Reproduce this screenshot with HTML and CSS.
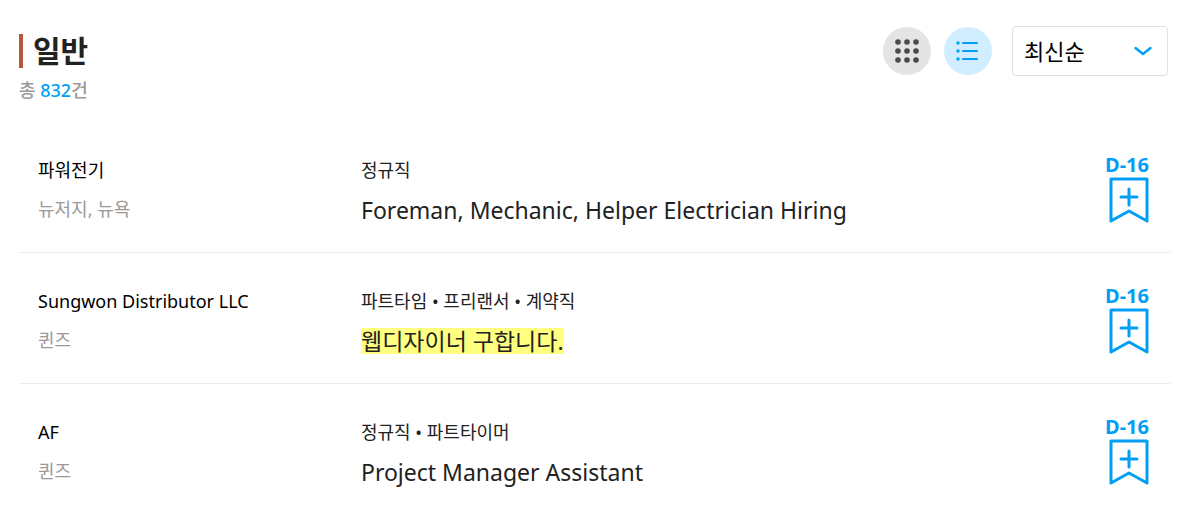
FILE: index.html
```html
<!DOCTYPE html>
<html lang="ko">
<head>
  <meta charset="UTF-8">
  <meta name="viewport" content="width=device-width, initial-scale=1.0">
  <title>일반 채용</title>
  <link rel="stylesheet" href="styles.css">
</head>
<body>
  <svg width="0" height="0" class="symbols" aria-hidden="true">
    <symbol id="bookmark" viewBox="0 0 40 46">
      <path d="M2 2h36v42L20 34 2 44z"/>
      <path d="M20 12v16M12 20h16"/>
    </symbol>
  </svg>

  <main class="container">
    <header class="header">
      <div class="heading">
        <h1>일반</h1>
        <p class="total">총 <strong>832</strong>건</p>
      </div>
      <div class="tools">
        <button type="button" class="view-btn" aria-label="격자로 보기">
          <svg width="26" height="26" viewBox="0 0 26 26" fill="#4a4a4a">
            <circle cx="4" cy="4" r="2.800"/><circle cx="13" cy="4" r="2.800"/><circle cx="22" cy="4" r="2.800"/>
            <circle cx="4" cy="13" r="2.800"/><circle cx="13" cy="13" r="2.800"/><circle cx="22" cy="13" r="2.800"/>
            <circle cx="4" cy="22" r="2.800"/><circle cx="13" cy="22" r="2.800"/><circle cx="22" cy="22" r="2.800"/>
          </svg>
        </button>
        <button type="button" class="view-btn active" aria-label="목록으로 보기">
          <svg width="24" height="24" viewBox="0 0 24 24" fill="#009ff5">
            <circle cx="2" cy="4" r="1.700"/><circle cx="2" cy="12" r="1.700"/><circle cx="2" cy="20" r="1.700"/>
            <rect x="6" y="3" width="16" height="2" rx="1"/>
            <rect x="6" y="11" width="16" height="2" rx="1"/>
            <rect x="6" y="19" width="16" height="2" rx="1"/>
          </svg>
        </button>
        <div class="sort">
          <select aria-label="정렬">
            <option>최신순</option>
            <option>마감순</option>
          </select>
          <svg width="18" height="10" viewBox="0 0 18 10"><path d="M1.500 2 9 8l7.500-6"/></svg>
        </div>
      </div>
    </header>

    <ul class="jobs">
      <li class="job">
        <div class="company">
          <p class="name">파워전기</p>
          <p class="place">뉴저지, 뉴욕</p>
        </div>
        <div class="detail">
          <p class="type">정규직</p>
          <h2><a href="#">Foreman, Mechanic, Helper Electrician Hiring</a></h2>
        </div>
        <div class="scrap">
          <span class="dday">D-16</span>
          <button type="button" aria-label="스크랩"><svg width="40" height="46"><use href="#bookmark"/></svg></button>
        </div>
      </li>
      <li class="job">
        <div class="company">
          <p class="name">Sungwon Distributor LLC</p>
          <p class="place">퀸즈</p>
        </div>
        <div class="detail">
          <p class="type">파트타임 • 프리랜서 • 계약직</p>
          <h2><a href="#" class="highlight">웹디자이너 구합니다.</a></h2>
        </div>
        <div class="scrap">
          <span class="dday">D-16</span>
          <button type="button" aria-label="스크랩"><svg width="40" height="46"><use href="#bookmark"/></svg></button>
        </div>
      </li>
      <li class="job">
        <div class="company">
          <p class="name">AF</p>
          <p class="place">퀸즈</p>
        </div>
        <div class="detail">
          <p class="type">정규직 • 파트타이머</p>
          <h2><a href="#">Project Manager Assistant</a></h2>
        </div>
        <div class="scrap">
          <span class="dday">D-16</span>
          <button type="button" aria-label="스크랩"><svg width="40" height="46"><use href="#bookmark"/></svg></button>
        </div>
      </li>
    </ul>
  </main>
</body>
</html>
```
FILE: styles.css
```css
* {
  box-sizing: border-box;
}
body {
  margin: 0;
  background-color: #fff;
  color: #222;
  font-family: "Noto Sans", "Noto Sans CJK KR", sans-serif;
  font-size: 18px;
}
h1, h2, p, ul {
  margin: 0;
  padding: 0;
}
button {
  border: 0;
  padding: 0;
  background: none;
  cursor: pointer;
}
svg {
  display: block;
}
.symbols {
  position: absolute;
}
.container {
  padding: 26px 10px 0 19px;
}
.header {
  display: flex;
  justify-content: space-between;
  align-items: flex-start;
  padding-right: 2px;
}
.heading {
  padding-top: 8px;
}
h1 {
  border-left: 4px solid #b5573a;
  padding-left: 10px;
  font-size: 30px;
  line-height: 34px;
}
.total {
  margin-top: 10px;
  color: #999;
  font-weight: 500;
  line-height: 24px;
}
.total strong {
  color: #009ff5;
  font-weight: 500;
}
.tools {
  display: flex;
  align-items: center;
  gap: 13px;
}
.view-btn {
  display: flex;
  align-items: center;
  justify-content: center;
  width: 48px;
  height: 48px;
  border-radius: 50%;
  background-color: #e4e4e4;
}
.view-btn.active {
  background-color: #d0eeff;
}
.sort {
  display: grid;
  align-items: center;
  margin-left: 7px;
}
.sort select,
.sort svg {
  grid-area: 1 / 1;
}
.sort select {
  appearance: none;
  width: 156px;
  height: 50px;
  padding: 0 11px;
  border: 1px solid #dde2e4;
  border-radius: 4px;
  background-color: #fff;
  color: #000;
  font-family: inherit;
  font-size: 22px;
}
.sort svg {
  justify-self: end;
  margin-right: 16px;
  fill: none;
  stroke: #009ff5;
  stroke-width: 2.5;
  stroke-linecap: round;
  stroke-linejoin: round;
  pointer-events: none;
}
.jobs {
  margin-top: 20px;
  list-style: none;
}
.job {
  display: flex;
  align-items: flex-start;
  padding: 31px 21px 26px 19px;
  border-bottom: 1px solid #ebebeb;
}
.job:last-child {
  padding-bottom: 0;
  border-bottom: 0;
}
.company,
.detail {
  padding-top: 5px;
}
.company {
  width: 323px;
}
.detail {
  flex: 1;
}
.name, .place, .type {
  line-height: 24px;
}
.name {
  color: #000;
}
.place {
  margin-top: 15px;
  color: #999;
}
h2 {
  margin-top: 12px;
  font-size: 23px;
  font-weight: 400;
  line-height: 32px;
}
h2 a {
  color: inherit;
  text-decoration: none;
}
.highlight {
  display: inline-block;
  background-color: #ffff80;
  line-height: 26px;
}
.scrap {
  display: flex;
  flex-direction: column;
  align-items: flex-end;
}
.dday {
  color: #009ff5;
  font-size: 20px;
  font-weight: 700;
  line-height: 24px;
}
.scrap svg {
  fill: none;
  stroke: #009ff5;
  stroke-width: 3;
  stroke-linecap: round;
  stroke-linejoin: round;
}
```
